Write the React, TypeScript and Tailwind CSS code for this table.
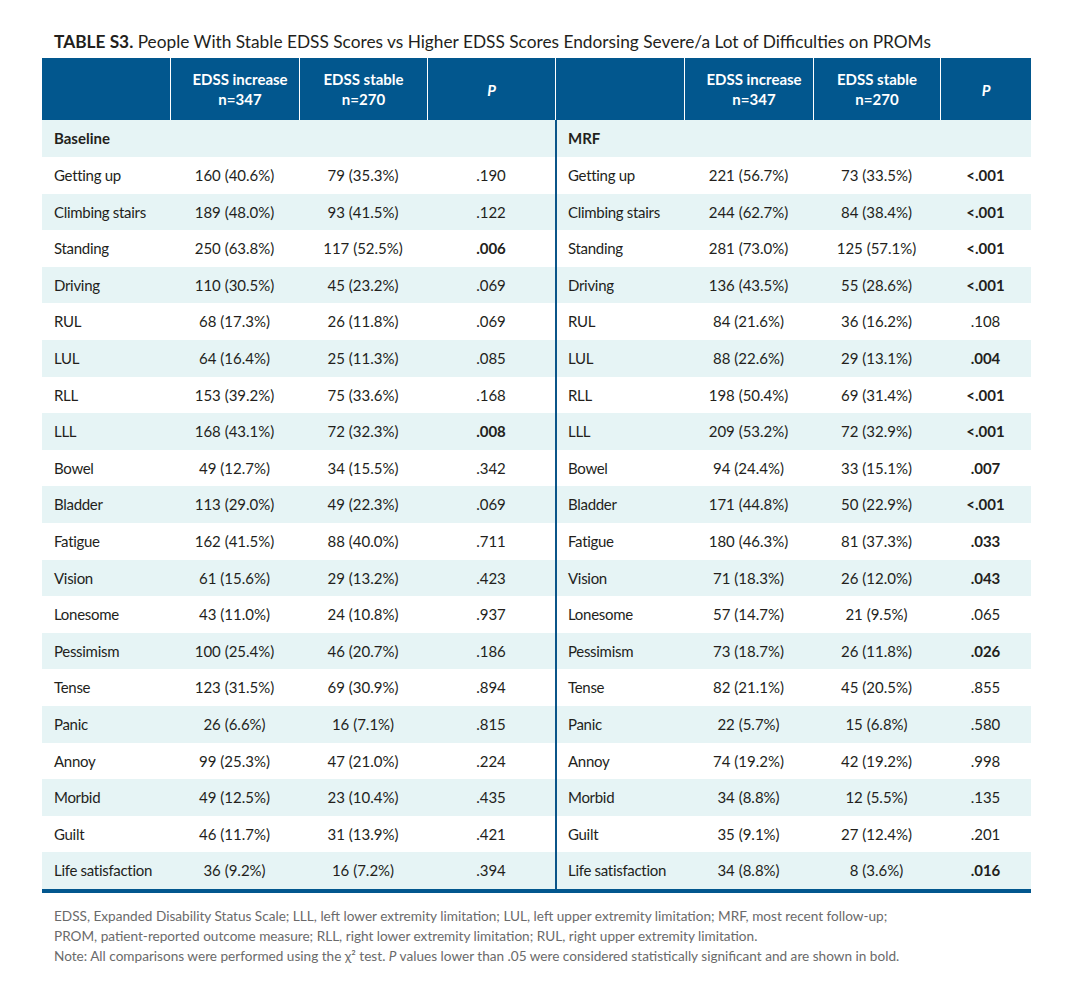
import React from "react";

type Row = {
  label: string;
  inc: string;
  stable: string;
  p: string;
  bold?: boolean;
};

const baseline: Row[] = [
  { label: "Getting up", inc: "160 (40.6%)", stable: "79 (35.3%)", p: ".190" },
  { label: "Climbing stairs", inc: "189 (48.0%)", stable: "93 (41.5%)", p: ".122" },
  { label: "Standing", inc: "250 (63.8%)", stable: "117 (52.5%)", p: ".006", bold: true },
  { label: "Driving", inc: "110 (30.5%)", stable: "45 (23.2%)", p: ".069" },
  { label: "RUL", inc: "68 (17.3%)", stable: "26 (11.8%)", p: ".069" },
  { label: "LUL", inc: "64 (16.4%)", stable: "25 (11.3%)", p: ".085" },
  { label: "RLL", inc: "153 (39.2%)", stable: "75 (33.6%)", p: ".168" },
  { label: "LLL", inc: "168 (43.1%)", stable: "72 (32.3%)", p: ".008", bold: true },
  { label: "Bowel", inc: "49 (12.7%)", stable: "34 (15.5%)", p: ".342" },
  { label: "Bladder", inc: "113 (29.0%)", stable: "49 (22.3%)", p: ".069" },
  { label: "Fatigue", inc: "162 (41.5%)", stable: "88 (40.0%)", p: ".711" },
  { label: "Vision", inc: "61 (15.6%)", stable: "29 (13.2%)", p: ".423" },
  { label: "Lonesome", inc: "43 (11.0%)", stable: "24 (10.8%)", p: ".937" },
  { label: "Pessimism", inc: "100 (25.4%)", stable: "46 (20.7%)", p: ".186" },
  { label: "Tense", inc: "123 (31.5%)", stable: "69 (30.9%)", p: ".894" },
  { label: "Panic", inc: "26 (6.6%)", stable: "16 (7.1%)", p: ".815" },
  { label: "Annoy", inc: "99 (25.3%)", stable: "47 (21.0%)", p: ".224" },
  { label: "Morbid", inc: "49 (12.5%)", stable: "23 (10.4%)", p: ".435" },
  { label: "Guilt", inc: "46 (11.7%)", stable: "31 (13.9%)", p: ".421" },
  { label: "Life satisfaction", inc: "36 (9.2%)", stable: "16 (7.2%)", p: ".394" },
];

const mrf: Row[] = [
  { label: "Getting up", inc: "221 (56.7%)", stable: "73 (33.5%)", p: "<.001", bold: true },
  { label: "Climbing stairs", inc: "244 (62.7%)", stable: "84 (38.4%)", p: "<.001", bold: true },
  { label: "Standing", inc: "281 (73.0%)", stable: "125 (57.1%)", p: "<.001", bold: true },
  { label: "Driving", inc: "136 (43.5%)", stable: "55 (28.6%)", p: "<.001", bold: true },
  { label: "RUL", inc: "84 (21.6%)", stable: "36 (16.2%)", p: ".108" },
  { label: "LUL", inc: "88 (22.6%)", stable: "29 (13.1%)", p: ".004", bold: true },
  { label: "RLL", inc: "198 (50.4%)", stable: "69 (31.4%)", p: "<.001", bold: true },
  { label: "LLL", inc: "209 (53.2%)", stable: "72 (32.9%)", p: "<.001", bold: true },
  { label: "Bowel", inc: "94 (24.4%)", stable: "33 (15.1%)", p: ".007", bold: true },
  { label: "Bladder", inc: "171 (44.8%)", stable: "50 (22.9%)", p: "<.001", bold: true },
  { label: "Fatigue", inc: "180 (46.3%)", stable: "81 (37.3%)", p: ".033", bold: true },
  { label: "Vision", inc: "71 (18.3%)", stable: "26 (12.0%)", p: ".043", bold: true },
  { label: "Lonesome", inc: "57 (14.7%)", stable: "21 (9.5%)", p: ".065" },
  { label: "Pessimism", inc: "73 (18.7%)", stable: "26 (11.8%)", p: ".026", bold: true },
  { label: "Tense", inc: "82 (21.1%)", stable: "45 (20.5%)", p: ".855" },
  { label: "Panic", inc: "22 (5.7%)", stable: "15 (6.8%)", p: ".580" },
  { label: "Annoy", inc: "74 (19.2%)", stable: "42 (19.2%)", p: ".998" },
  { label: "Morbid", inc: "34 (8.8%)", stable: "12 (5.5%)", p: ".135" },
  { label: "Guilt", inc: "35 (9.1%)", stable: "27 (12.4%)", p: ".201" },
  { label: "Life satisfaction", inc: "34 (8.8%)", stable: "8 (3.6%)", p: ".016", bold: true },
];

const cols =
  "grid grid-cols-[128px_129px_128px_128px_129px_129px_127px_91px]";

function HeadCells() {
  return (
    <>
      <div className="border-l border-white flex flex-col items-center justify-center leading-[20px] pl-[10px]">
        <span>EDSS increase</span>
        <span>n=347</span>
      </div>
      <div className="border-l border-white flex flex-col items-center justify-center leading-[20px]">
        <span>EDSS stable</span>
        <span>n=270</span>
      </div>
      <div className="border-l border-white flex items-center justify-center pt-[2px]">
        <span className="italic">P</span>
      </div>
    </>
  );
}

function Half({ r, first }: { r: Row; first?: boolean }) {
  return (
    <>
      <div className={`flex items-center tracking-[-0.3px] ${first ? "pl-[12px]" : "pl-[11px] border-l-2 border-[#0b5589]"}`}>
        {r.label}
      </div>
      <div className="flex items-center justify-center">{r.inc}</div>
      <div className="flex items-center justify-center">{r.stable}</div>
      <div className={`flex items-center justify-center ${r.bold ? "font-bold" : ""}`}>
        {r.p}
      </div>
    </>
  );
}

export default function App() {
  return (
    <div className="bg-white w-[1076px] h-[1002px] pt-[30px] pl-[42px] font-['Lato',sans-serif] text-[#231f1c]">
      <h1 className="pl-[12px] text-[17.3px] leading-[24px] h-[28px]">
        <span className="font-bold">TABLE S3.</span> People With Stable EDSS Scores vs Higher EDSS Scores Endorsing Severe/a Lot of Difficulties on PROMs
      </h1>

      <div className="w-[989px] text-[15px]">
        <div className={`${cols} h-[62px] bg-[#02578e] text-white font-bold text-[15px]`}>
          <div />
          <HeadCells />
          <div className="border-l border-white" />
          <HeadCells />
        </div>

        <div className={`${cols} h-[37px] bg-[#e6f4f5] font-bold`}>
          <div className="flex items-center pl-[12px] col-span-4">Baseline</div>
          <div className="flex items-center pl-[11px] col-span-4 border-l-2 border-[#0b5589]">MRF</div>
        </div>

        {baseline.map((b, i) => (
          <div
            key={b.label}
            className={`${cols} h-[36.6px] ${i % 2 === 1 ? "bg-[#e6f4f5]" : "bg-white"}`}
          >
            <Half r={b} first />
            <Half r={mrf[i]} />
          </div>
        ))}

        <div className="h-[4px] bg-[#02578e]" />
      </div>

      <div className="pl-[12px] pt-[13px] text-[13.6px] leading-[20px] text-[#6a6a6a]">
        <p>
          EDSS, Expanded Disability Status Scale; LLL, left lower extremity limitation; LUL, left upper extremity limitation; MRF, most recent follow-up;
        </p>
        <p>
          PROM, patient-reported outcome measure; RLL, right lower extremity limitation; RUL, right upper extremity limitation.
        </p>
        <p>
          Note: All comparisons were performed using the χ² test. <span className="italic">P</span> values lower than .05 were considered statistically significant and are shown in bold.
        </p>
      </div>
    </div>
  );
}
